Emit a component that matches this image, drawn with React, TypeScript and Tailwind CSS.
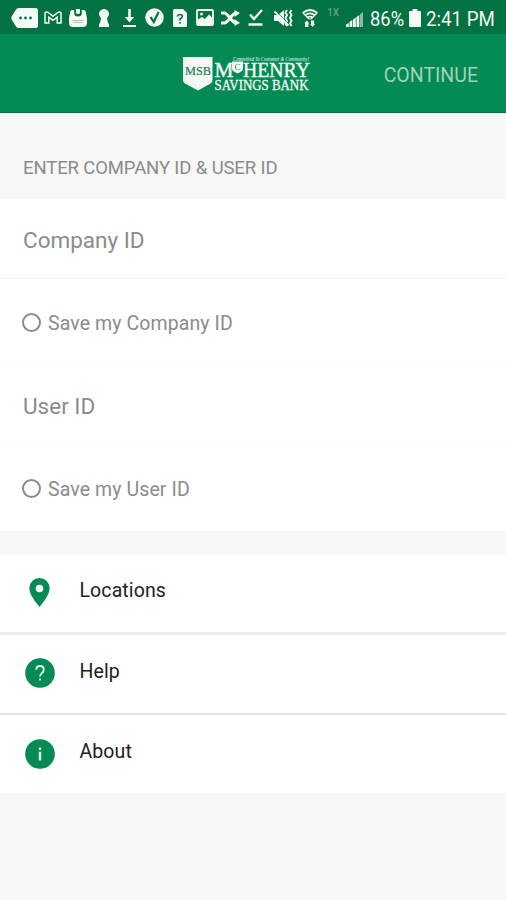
import { useState, type ReactNode } from "react";

type CellProps = {
  width?: string;
  children: ReactNode;
};

function StatusCell({ width = "w-[25.3px]", children }: CellProps) {
  return <span className={`flex h-full shrink-0 items-center justify-center pt-px ${width}`}>{children}</span>;
}

function StatusBar() {
  return (
    <div className="flex h-[34px] items-center bg-[#037243] pl-[10.5px] text-[#f4faf5]">
      <StatusCell width="w-[30px]">
        <svg className="mr-[3px] h-5 w-[27px]" viewBox="0 0 27 20" fill="currentColor">
          <path d="M8 0h16.500Q27 0 27 2.500v15Q27 20 24.500 20H8Q6 20 5 18.500L.6 11.500Q0 10 .6 8.500L5 1.500Q6 0 8 0Z" />
          <g fill="#037243">
            <circle cx="9.500" cy="10" r="1.400" />
            <circle cx="14.500" cy="10" r="1.400" />
            <circle cx="19.500" cy="10" r="1.400" />
          </g>
        </svg>
      </StatusCell>
      <StatusCell>
        <svg className="h-[13px] w-[18px]" viewBox="0 0 18 13" fill="none" stroke="currentColor" strokeWidth="1.500">
          <path d="M1 1.800Q2.600.2 4.200 1.500L9 5.200l4.800-3.700Q15.400.2 17 1.800V12h-3.800V6.200L9 9.400 4.800 6.200V12H1Z" />
        </svg>
      </StatusCell>
      <StatusCell>
        <svg className="h-[18px] w-[18px]" viewBox="0 0 18 18">
          <path d="M3 1h2.200v3.500q0 3 3.800 3t3.800-3V1H15q1.300 0 1.700 1.500L18 9v5q0 4-4 4H4q-4 0-4-4V9l1.300-6.500Q1.700 1 3 1Z" fill="currentColor" />
          <path d="M7 0h4v3.500q0 1.500-2 1.500T7 3.500Z" fill="currentColor" />
          <path d="M3.500 11.500h11M4.500 13.500h9" stroke="#a3ccb6" strokeWidth="1.200" />
        </svg>
      </StatusCell>
      <StatusCell>
        <svg className="h-[18px] w-[12px]" viewBox="0 0 12 18" fill="currentColor">
          <path d="M6 0a5 5 0 0 1 5 5q0 2-2 4 .5 4 2 6.500V18H1v-2.500Q2.500 13 3 9 1 7 1 5a5 5 0 0 1 5-5Z" />
        </svg>
      </StatusCell>
      <StatusCell>
        <svg className="h-[18px] w-[15px]" viewBox="0 0 15 18" fill="currentColor">
          <path d="M6.200 0h2.600v8h3.400l-4.700 5.500L2.800 8h3.400ZM1 16h13v2H1Z" />
        </svg>
      </StatusCell>
      <StatusCell>
        <svg className="h-[19px] w-[19px]" viewBox="0 0 19 19" fill="none">
          <circle cx="9.500" cy="9.500" r="9.300" fill="currentColor" />
          <path d="m5.500 9 3.300 5 4.800-10" stroke="#037243" strokeWidth="2.200" />
        </svg>
      </StatusCell>
      <StatusCell>
        <svg className="h-[18px] w-[14px]" viewBox="0 0 14 18">
          <path d="M1.500 0H10l4 4v12.500q0 1.500-1.500 1.500h-11Q0 18 0 16.500v-15Q0 0 1.500 0Z" fill="currentColor" />
          <path d="M4.500 7.500Q4.700 5.500 7 5.500t2.300 2Q9.300 9 7 10v1.500M7 13v1.800" fill="none" stroke="#037243" strokeWidth="1.600" />
        </svg>
      </StatusCell>
      <StatusCell>
        <svg className="h-[17px] w-[18px]" viewBox="0 0 18 17">
          <rect x="1" y="1" width="16" height="15" rx="1" fill="none" stroke="currentColor" strokeWidth="1.800" />
          <path d="M2 10.500 6 8l3 2 4-4.500 3 3V15H2Z" fill="currentColor" />
          <circle cx="5.500" cy="5" r="1.500" fill="currentColor" />
        </svg>
      </StatusCell>
      <StatusCell>
        <svg className="h-[16px] w-[19px]" viewBox="0 0 19 16" fill="currentColor">
          <path d="M0 3h3.500Q5 3 9 8t6 5M0 13h3.500Q5 13 9 8t6-5" fill="none" stroke="currentColor" strokeWidth="3.200" />
          <path d="M13.500 0 19 3l-5.500 4ZM13.500 9l5.500 4-5.500 3Z" />
        </svg>
      </StatusCell>
      <StatusCell>
        <svg className="h-[17px] w-[15px]" viewBox="0 0 15 17" fill="none" stroke="currentColor" strokeWidth="2.300">
          <path d="m2 5.500 4 4.500L14 1M.5 15.500h14" />
        </svg>
      </StatusCell>
      <StatusCell width="w-[30px]">
        <svg className="h-[18px] w-[19px]" viewBox="0 0 19 18">
          <path d="M0 6h4l6-5v16l-6-5H0Z" fill="currentColor" />
          <path d="m13 1-1.500 2.500L13 6l-1.500 3 1.500 3-1.500 2.500L13 17M17.500 1 16 3.500 17.500 6 16 9l1.500 3-1.500 2.500 1.500 2.500" fill="none" stroke="currentColor" strokeWidth="1.900" />
          <path d="m2 2.500 13 13.500" stroke="#037243" strokeWidth="1.200" />
          <path d="m.5 2.500 14 14" stroke="currentColor" strokeWidth="1.900" />
        </svg>
      </StatusCell>
      <StatusCell width="w-6">
        <svg className="h-[18px] w-4" viewBox="0 0 16 18" fill="none" stroke="currentColor" strokeWidth="1.700">
          <path d="M.7 4Q8-2 15.300 4M3 6.300q5-4 10 0M5 8.800q3-2.500 6 0" />
          <path d="m1 4 6 6h2l6-6" strokeWidth="1.200" />
          <path d="m4.800 11.500 2.400 2.800H6.400V18H3.200v-3.700h-.8ZM9 11.500h3.200v3.500h.8L10.600 18l-2.400-3H9Z" fill="currentColor" stroke="none" />
        </svg>
      </StatusCell>
      <span className="ml-[5px] mb-[9px] w-[18px] whitespace-nowrap font-['Roboto'] text-[10px] leading-none text-[#73ad8e]">1X</span>
      <svg className="ml-px mt-[3px] h-4 w-[17px] shrink-0" viewBox="0 0 17 16" fill="currentColor">
        <path d="M0 16v-2.500L2.800 12v4ZM3.500 16v-5L6.300 9v7ZM7 16V8.500l2.800-2V16ZM10.500 16V6l2.800-2v12Z" />
        <path d="M14 16V3.200L17 1v15Z" opacity=".55" />
      </svg>
      <span className="ml-[7px] mt-[3px] w-[39px] whitespace-nowrap font-['Roboto'] text-[20px] leading-[36px]">
        <span className="inline-block origin-left scale-x-[0.92]">86%</span>
      </span>
      <svg className="mt-[2px] h-[18px] w-3 shrink-0" viewBox="0 0 12 18" fill="currentColor">
        <path d="M3.500 0h5v2H11q1 0 1 1v14q0 1-1 1H1q-1 0-1-1V3q0-1 1-1h2.500Z" />
      </svg>
      <span className="ml-[5px] mt-[3px] w-[70px] whitespace-nowrap font-['Roboto'] text-[20px] leading-[36px]">
        <span className="inline-block origin-left scale-x-[0.935]">2:41 PM</span>
      </span>
    </div>
  );
}

function BankLogo() {
  return (
    <svg className="h-9 w-[130px] overflow-visible" viewBox="0 0 130 36" fill="#f3faf5" fontFamily="'Liberation Serif', serif">
      <path d="M1 1h29.500v23Q30.500 26 28.500 27.500L16 34.500 3 27.500Q1 26 1 24Z" />
      <text x="3" y="18.500" fontSize="13.500" fill="#267b4e" stroke="#267b4e" strokeWidth=".2" textLength="26" lengthAdjust="spacingAndGlyphs">MSB</text>
      <text x="51" y="4.500" fontSize="5.500" fontStyle="italic" textLength="76" lengthAdjust="spacingAndGlyphs">Committed To Customer &amp; Community!</text>
      <text x="32.500" y="20.500" fontSize="21.500" stroke="#f3faf5" strokeWidth=".4" textLength="19" lengthAdjust="spacingAndGlyphs">M</text>
      <path d="M50 5.500h11v7.500q0 2-5.500 4.500-5.500-2.500-5.500-4.500Z" />
      <text x="52.500" y="13.500" fontSize="9" fill="#267b4e">C</text>
      <text x="61" y="20.500" fontSize="21.500" stroke="#f3faf5" strokeWidth=".4" textLength="67" lengthAdjust="spacingAndGlyphs">HENRY</text>
      <text x="32.500" y="33.500" fontSize="14.500" stroke="#f3faf5" strokeWidth=".3" textLength="94" lengthAdjust="spacingAndGlyphs">SAVINGS BANK</text>
    </svg>
  );
}

type SaveToggleProps = {
  label: string;
  checked: boolean;
  onToggle: () => void;
};

function SaveToggle({ label, checked, onToggle }: SaveToggleProps) {
  return (
    <button className="flex h-[86px] w-full items-center pl-[22px] text-left" onClick={onToggle} type="button">
      <span className="flex h-[19px] w-[19px] items-center justify-center rounded-full border-2 border-[#8b8b8b]">
        {checked ? <span className="h-2.5 w-2.5 rounded-full bg-[#048a53]" /> : null}
      </span>
      <span className="ml-[7px] mt-[3px] text-[19.5px] leading-6 tracking-[0.1px] text-[#8b8b8b]">{label}</span>
    </button>
  );
}

type MenuRowProps = {
  icon: ReactNode;
  label: string;
};

function MenuRow({ icon, label }: MenuRowProps) {
  return (
    <a className="flex h-[78px] items-center pb-[1px] pl-[25px]">
      <span className="flex w-[30px] justify-center">{icon}</span>
      <span className="-mt-[4px] ml-[24.5px] text-[19.5px] leading-6 tracking-[0.1px] text-[#202020]">{label}</span>
    </a>
  );
}

export default function App() {
  const [saveCompany, setSaveCompany] = useState(false);
  const [saveUser, setSaveUser] = useState(false);

  return (
    <div className="h-[900px] w-[506px] overflow-hidden bg-[#f7f7f7] font-['Roboto',sans-serif]">
      <StatusBar />
      <header className="flex h-[79px] items-center border-b border-[#047642] bg-[#048a53] pl-[182px] pr-[28px]">
        <span className="mt-px">
          <BankLogo />
        </span>
        <button className="ml-auto mt-[5px] text-[19.5px] leading-6 text-[#9fd2b9]" type="button">
          CONTINUE
        </button>
      </header>

      <h1 className="h-[86px] pl-[23px] pt-[43px] text-[18.500px] leading-6 tracking-[-0.12px] text-[#8b8b8b]">ENTER COMPANY ID &amp; USER ID</h1>

      <form className="bg-white">
        <div className="flex h-20 items-center border-b border-[#f0f0f0] pl-[23px] pt-[3px] text-[22.500px] leading-7 text-[#8b8b8b]">
          Company ID
        </div>
        <SaveToggle label="Save my Company ID" checked={saveCompany} onToggle={() => setSaveCompany(!saveCompany)} />
        <div className="flex h-20 items-center border-y border-[#fcfcfc] pl-[23px] pt-px text-[22.500px] leading-7 text-[#8b8b8b]">
          User ID
        </div>
        <SaveToggle label="Save my User ID" checked={saveUser} onToggle={() => setSaveUser(!saveUser)} />
      </form>

      <nav className="mt-[23px] bg-white">
        <MenuRow
          label="Locations"
          icon={
            <svg className="-ml-px h-[29px] w-[21px]" viewBox="0 0 21 29">
              <path d="M10.500 0A10.200 10.200 0 0 1 20.700 10.200Q20.700 17 10.500 29 .3 17 .3 10.200A10.200 10.200 0 0 1 10.500 0Z" fill="#048a53" />
              <circle cx="10.500" cy="10.500" r="3.800" fill="white" />
            </svg>
          }
        />
        <div className="h-[3px] bg-[#ececec]" />
        <MenuRow
          label="Help"
          icon={
            <svg className="-mt-[2px] h-[30px] w-[30px]" viewBox="0 0 30 30">
              <circle cx="15" cy="15" r="14.800" fill="#048a53" />
              <path d="M11.200 11.800Q11.200 8 15 8t3.800 3.500Q18.800 13.500 17 15t-2 3.500" fill="none" stroke="#e5f4ec" strokeWidth="1.800" />
              <path d="M14 20.500h2v2h-2Z" fill="#e5f4ec" />
            </svg>
          }
        />
        <div className="h-[2px] bg-[#e2e2e2]" />
        <MenuRow
          label="About"
          icon={
            <svg className="h-[30px] w-[30px]" viewBox="0 0 30 30">
              <circle cx="15" cy="15" r="14.800" fill="#048a53" />
              <path d="M13.800 8.500h2.400v2.400h-2.400ZM13.800 12.700h2.400V21.500h-2.400Z" fill="#e5f4ec" />
            </svg>
          }
        />
      </nav>
    </div>
  );
}
